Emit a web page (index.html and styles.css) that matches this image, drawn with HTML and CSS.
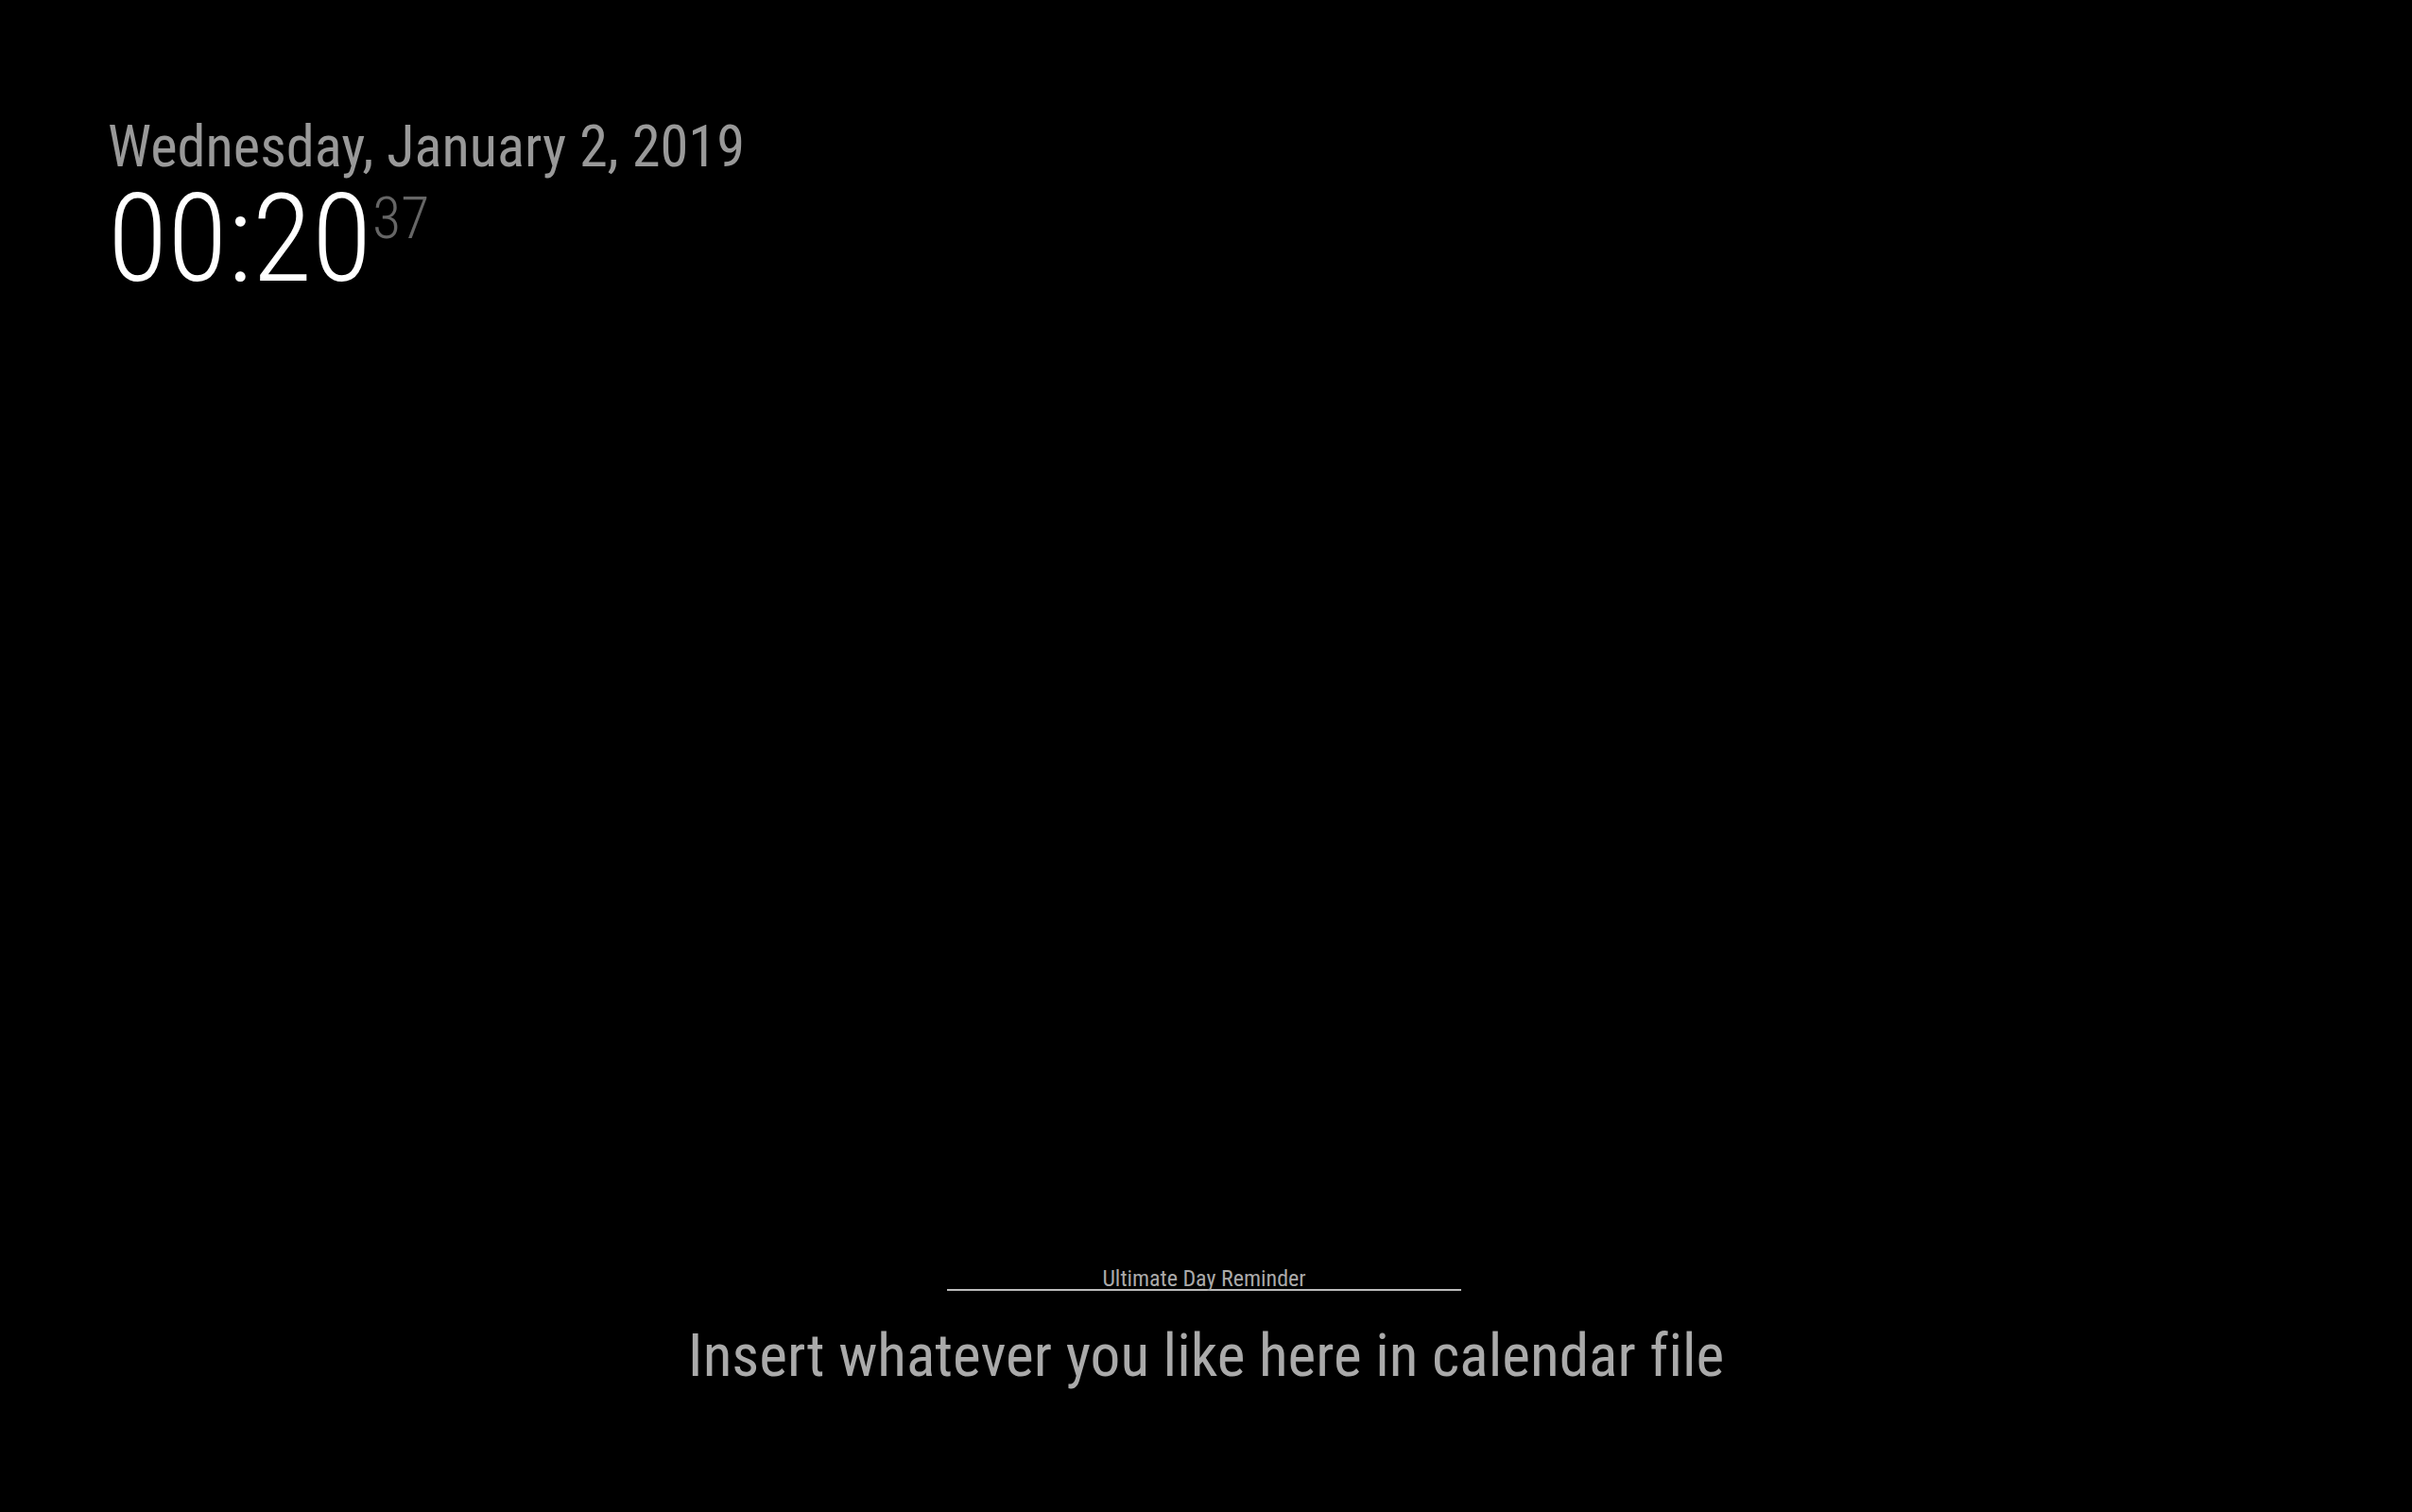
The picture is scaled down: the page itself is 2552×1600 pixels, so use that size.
FILE: index.html
```html
<!DOCTYPE html>
<html>
<head>
<meta charset="utf-8">
<title>MagicMirror</title>
<link rel="stylesheet" href="styles.css">
</head>
<body>
<div class="mirror">
  <div class="region-top-left">
    <div class="clock">
      <div class="date">Wednesday, January 2, 2019</div>
      <div class="time"><span class="hm">00:20</span><sup class="seconds">37</sup></div>
    </div>
  </div>
  <div class="region-bottom">
    <div class="module">
      <header class="module-header">Ultimate Day Reminder</header>
      <div class="reminder">Insert whatever you like here in calendar file</div>
    </div>
  </div>
</div>
</body>
</html>
```
FILE: styles.css
```css
html, body {
  margin: 0;
  padding: 0;
  background: #000;
}

body {
  font-family: "Roboto Condensed", "Roboto", "Liberation Sans", sans-serif;
  font-variant-ligatures: none;
  color: #aaa;
}

.mirror {
  height: 1600px;
  display: flex;
  flex-direction: column;
  justify-content: space-between;
  box-sizing: border-box;
  padding: 121px 0 126px 114px;
}

.date {
  font-size: 60.5px;
  line-height: 70px;
  font-weight: 400;
  color: #999;
}

.time {
  margin-top: -3px;
  font-size: 130px;
  line-height: 130px;
  font-weight: 300;
  color: #fff;
  white-space: nowrap;
}

.seconds {
  display: inline-block;
  vertical-align: top;
  margin-left: 1px;
  font-size: 62px;
  line-height: 85px;
  font-weight: 300;
  color: #666;
}

.region-bottom {
  display: flex;
  justify-content: center;
  margin-left: -114px;
}

.module {
  display: flex;
  flex-direction: column;
  align-items: center;
}

.module-header {
  width: 544px;
  font-size: 24px;
  line-height: 21px;
  text-align: center;
  color: #aaa;
  border-bottom: 2px solid #bbb;
  margin-left: -4px;
}

.reminder {
  margin-top: 28px;
  font-size: 63.4px;
  line-height: 80px;
  color: #aaa;
  white-space: nowrap;
}
```
